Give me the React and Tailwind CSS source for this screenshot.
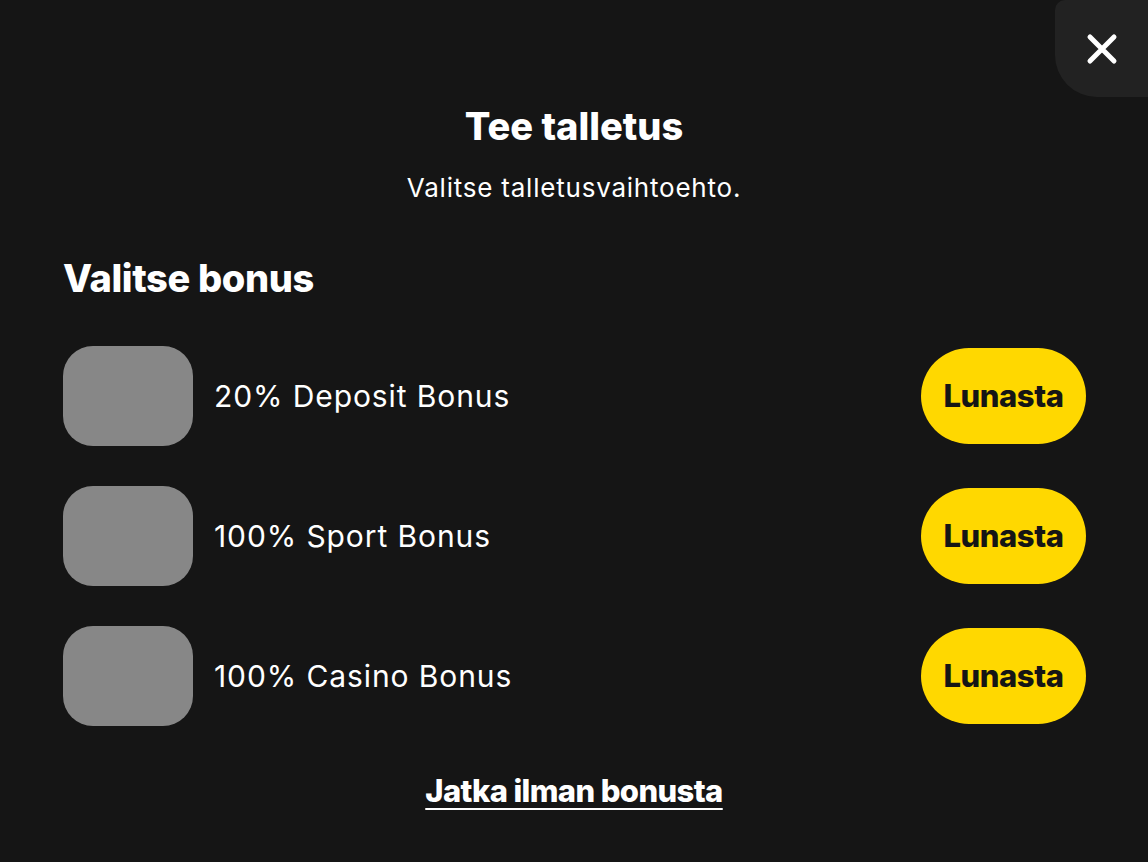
import React from 'react';

const bonuses = [
    { id: 1, title: '20% Deposit Bonus' },
    { id: 2, title: '100% Sport Bonus' },
    { id: 3, title: '100% Casino Bonus' },
];

const CloseIcon = () => (
    <svg width="32" height="32" viewBox="0 0 32 32" fill="none">
        <path d="M4 4L28 28M28 4L4 28" stroke="white" strokeWidth="5" strokeLinecap="round" />
    </svg>
);

const BonusRow = ({ bonus }) => (
    <div className="flex items-center h-[100px]">
        {/* Image placeholder */}
        <div className="w-[130px] h-[100px] rounded-[30px] bg-[#878787] shrink-0" />
        <span className="ml-[21px] text-[30px] text-white font-['Inter',sans-serif] tracking-[0.03em]">
            {bonus.title}
        </span>
        <button className="ml-auto mr-[62px] w-[165px] h-[96px] rounded-full bg-[#ffd800] text-[#151515] text-[31px] font-extrabold font-['Inter',sans-serif] tracking-[-0.015em]">
            Lunasta
        </button>
    </div>
);

const App = () => {
    return (
        <div className="relative w-[1148px] h-[862px] bg-[#151515] overflow-hidden">
            {/* Close button */}
            <button className="absolute top-0 right-0 w-[93px] h-[97px] bg-[#222222] rounded-bl-[42px] rounded-tl-[10px] flex items-center justify-center">
                <CloseIcon />
            </button>

            <div className="flex flex-col pt-[102px] pl-[63px]">
                <div className="flex flex-col items-center pr-[63px]">
                    <h1 className="text-[38px] leading-[48px] font-extrabold text-white font-['Inter',sans-serif]">
                        Tee talletus
                    </h1>
                    <p className="mt-[22px] text-[26px] leading-[32px] text-white font-['Inter',sans-serif] tracking-[0.03em]">
                        Valitse talletusvaihtoehto.
                    </p>
                </div>

                <h2 className="mt-[50px] text-[38px] leading-[48px] font-extrabold text-white font-['Inter',sans-serif] tracking-[-0.01em]">
                    Valitse bonus
                </h2>

                <div className="mt-[44px] flex flex-col gap-[40px]">
                    {bonuses.map((b) => (
                        <BonusRow key={b.id} bonus={b} />
                    ))}
                </div>

                <div className="mt-[45px] flex justify-center pr-[63px]">
                    <a href="#" className="text-[31px] leading-[40px] font-extrabold text-white underline underline-offset-[6px] decoration-2 font-['Inter',sans-serif] tracking-[-0.02em]">
                        Jatka ilman bonusta
                    </a>
                </div>
            </div>
        </div>
    );
};

export default App;
